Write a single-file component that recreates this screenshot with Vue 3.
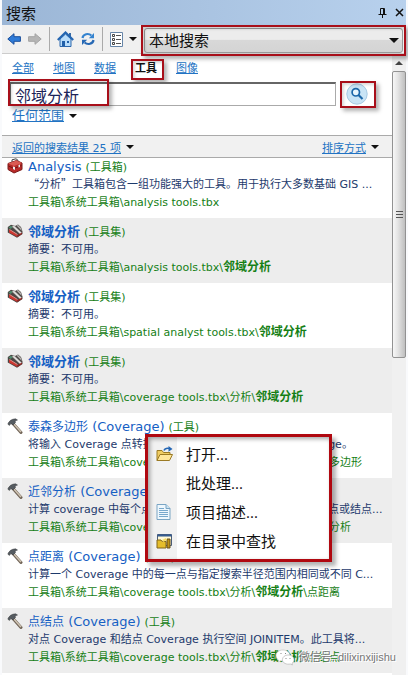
<script setup>
import { ref } from 'vue';

const scope = ref('本地搜索');
const keyword = ref('邻域分析');
const activeTab = ref('工具');
const menuOpen = ref(true);

const tabs = ['全部', '地图', '数据', '工具', '图像'];

const root = '工具箱\\系统工具箱\\';

const results = [
  { icon: 'box', name: '', suffix: 'Analysis', type: '工具箱', quoted: '“分析”', desc: '工具箱包含一组功能强大的工具。用于执行大多数基础 GIS ...', path: root + 'analysis tools.tbx' },
  { icon: 'set', name: '邻域分析', strong: true, type: '工具集', desc: '摘要：不可用。', path: root + 'analysis tools.tbx\\', hit: '邻域分析' },
  { icon: 'set', name: '邻域分析', strong: true, type: '工具集', desc: '摘要：不可用。', path: root + 'spatial analyst tools.tbx\\', hit: '邻域分析' },
  { icon: 'set', name: '邻域分析', strong: true, type: '工具集', desc: '摘要：不可用。', path: root + 'coverage tools.tbx\\分析\\', hit: '邻域分析' },
  { icon: 'hammer', name: '泰森多边形', suffix: '(Coverage)', type: '工具', desc: '将输入 Coverage 点转换为由泰森多边形组成的输出 Coverage。', path: root + 'coverage tools.tbx\\分析\\', hit: '邻域分析', tail: '\\泰森多边形' },
  { icon: 'hammer', name: '近邻分析', suffix: '(Coverage)', type: '工具', desc: '计算 coverage 中每个点与另一个图层要素中距离最近的线、点或结点...', path: root + 'coverage tools.tbx\\分析\\', hit: '邻域分析', tail: '\\近邻分析' },
  { icon: 'hammer', name: '点距离', suffix: '(Coverage)', type: '工具', desc: '计算一个 Coverage 中的每一点与指定搜索半径范围内相同或不同 C...', path: root + 'coverage tools.tbx\\分析\\', hit: '邻域分析', tail: '\\点距离' },
  { icon: 'hammer', name: '点结点', suffix: '(Coverage)', type: '工具', desc: '对点 Coverage 和结点 Coverage 执行空间 JOINITEM。此工具将...', path: root + 'coverage tools.tbx\\分析\\', hit: '邻域分析', tail: '\\点结点' },
];

const menu = [
  { icon: 'open', label: '打开...' },
  { icon: '', label: '批处理...' },
  { icon: 'doc', label: '项目描述...' },
  { icon: 'catalog', label: '在目录中查找' },
];
</script>

<template>
  <div class="panel">
    <header class="titlebar">
      <span class="caption">搜索</span>
      <button class="tb" aria-label="固定">
        <svg width="9" height="10" viewBox="0 0 9 10"><path d="M2.500 6V.5h4V6M5.500.5V6M.5 6.500h8M4.500 6.500V10" fill="none" stroke="#111" /></svg>
      </button>
      <button class="tb" aria-label="关闭">
        <svg width="9" height="9" viewBox="0 0 9 9"><path d="M1 1l7 7M8 1L1 8" stroke="#111" stroke-width="1.500" /></svg>
      </button>
    </header>

    <div class="toolbar">
      <button class="tool" aria-label="后退">
        <svg width="14" height="12" viewBox="0 0 14 12"><path d="M7 .7v3h6.400v4.600H7v3L.8 6z" fill="#2f7bd8" stroke="#1b4f9c" /></svg>
      </button>
      <button class="tool" aria-label="前进">
        <svg width="14" height="12" viewBox="0 0 14 12"><path d="M7 .7v3H.6v4.600H7v3L13.200 6z" fill="#b5b5b5" stroke="#a4a4a4" /></svg>
      </button>
      <span class="sep"></span>
      <button class="tool" aria-label="主页">
        <svg width="17" height="17" viewBox="0 0 17 17">
          <path d="M12 2h2v4h-2z" fill="#376ba8" />
          <path d="M3 8v7.500h11V8L8.500 3z" fill="#b8dcfa" stroke="#2b66ac" />
          <path d="M.8 9L8.500 1.500 16.200 9" fill="none" stroke="#2465b1" stroke-width="2.200" />
          <path d="M5 10h3v5H5z" fill="#215fa9" /><path d="M10 10h2v2h-2z" fill="#215fa9" />
        </svg>
      </button>
      <button class="tool" aria-label="刷新">
        <svg width="14" height="14" viewBox="0 0 14 14">
          <path d="M1.500 6C2 2 7.500.8 10.300 3.500" fill="none" stroke="#3483cf" stroke-width="2.200" />
          <path d="M13 1v5.200H7.800z" fill="#3483cf" />
          <path d="M12.500 8C12 12 6.500 13.200 3.700 10.500" fill="none" stroke="#2769b5" stroke-width="2.200" />
          <path d="M1 13V7.800h5.200z" fill="#2769b5" />
        </svg>
      </button>
      <span class="sep"></span>
      <button class="tool views" aria-label="视图">
        <svg width="13" height="15" viewBox="0 0 13 15">
          <path d="M.5.5h12v14H.5z" fill="#fff" stroke="#6685a8" />
          <path d="M2.500 2.500h2v2h-2zM2.500 6.500h2v2h-2zM2.500 10.500h2v2h-2z" fill="#fff" stroke="#444" />
          <path d="M6 3.500h5M6 7.500h5M6 11.500h5" stroke="#555" />
        </svg>
        <i class="caret"></i>
      </button>
      <div class="scope mark">
        <select v-model="scope" aria-label="搜索范围">
          <option>本地搜索</option>
        </select>
        <i class="caret"></i>
      </div>
    </div>

    <div class="body">
      <main class="content">
        <nav class="tabs">
          <a v-for="tab in tabs" :key="tab" href="#" :class="{ active: tab === activeTab, mark: tab === activeTab }" @click.prevent="activeTab = tab">{{ tab }}</a>
        </nav>

        <form class="search" @submit.prevent>
          <div class="field mark">
            <input v-model="keyword" type="text" aria-label="搜索内容" />
          </div>
          <button class="go mark" aria-label="搜索">
            <svg width="22" height="22" viewBox="0 0 22 22">
              <circle cx="11" cy="11" r="10.200" fill="#c9e4f5" stroke="#a6c9e2" />
              <circle cx="9.800" cy="9.300" r="3.700" fill="#e9f6fd" stroke="#1c67a8" stroke-width="1.700" />
              <path d="M12.500 12l4 4" stroke="#1c67a8" stroke-width="2.200" />
            </svg>
          </button>
        </form>

        <div class="extent">
          <a href="#" @click.prevent>任何范围</a><i class="caret"></i>
        </div>

        <div class="summary">
          <a href="#" @click.prevent>返回的搜索结果 25 项</a><i class="caret"></i>
          <a class="sort" href="#" @click.prevent>排序方式</a><i class="caret"></i>
        </div>

        <ul class="results">
          <li v-for="(item, i) in results" :key="i" @contextmenu.prevent="menuOpen = true">
            <svg v-if="item.icon === 'box'" class="icon" width="16" height="16" viewBox="0 0 16 16">
              <path d="M5 4V1.800L9 .8l2 1.500V4" fill="none" stroke="#444" />
              <path d="M1 5.500L9.500 2.500 15 5v6.500L7 15 1 11.500z" fill="#b92a28" stroke="#7b1b1a" />
              <path d="M1 5.500L9.500 2.500 15 5 7 8z" fill="#da5b53" />
              <path d="M1.500 8L7 10.500 14.500 7.500" fill="none" stroke="#721615" />
              <path d="M6 8.500l2 .5v3l-2-1zM11.500 7l1.500-.5v2.500l-1.500.5z" fill="#eee" />
            </svg>
            <svg v-else-if="item.icon === 'set'" class="icon" width="16" height="16" viewBox="0 0 16 16">
              <path d="M.8 4L4 1.800 8 3l3-1.500 3 2.500 1.500 4.500V11L10 14.800.8 9.500z" fill="#4a4543" />
              <path d="M1.500 4.500L4 2.800 6 4 3.500 6z" fill="#4f8a6d" />
              <path d="M5 3.500l2-1L15 10l-1.500 1.500z" fill="#e4e2e0" stroke="#8a8683" stroke-width=".5" />
              <path d="M9.500 2.500L11 2l3 3 .8 3z" fill="#b9b6b3" />
              <path d="M2 6.500l8.500 5.500v2L2 9.500z" fill="#cf3630" />
              <path d="M2.500 6.500l8 5" stroke="#ef8d85" />
              <path d="M10.500 12l4.500-2.500V11l-4.500 3z" fill="#8e211e" />
            </svg>
            <svg v-else class="icon" width="16" height="16" viewBox="0 0 16 16">
              <path d="M6 5.500L14 14.500" stroke="#6f6255" stroke-width="3" stroke-linecap="round" />
              <path d="M6.500 5.500L14 14" stroke="#cfc4b3" stroke-width="1.500" />
              <path d="M.8 6C2 3 4.500 1 8.500.8l2 1.200-2.500 1L8.500 4.500 6 7 4 5.500 2.300 7.500z" fill="#555b60" stroke="#303336" stroke-width=".5" />
            </svg>
            <div class="text">
              <h3>
                <a href="#" :class="{ strong: item.strong }" @click.prevent>{{ item.name }}<span v-if="item.suffix" class="latin">{{ (item.name ? ' ' : '') + item.suffix }}</span></a>
                <span class="type">({{ item.type }})</span>
              </h3>
              <p class="desc"><span v-if="item.quoted" class="quoted">{{ item.quoted }}</span>{{ item.desc }}</p>
              <p class="path">{{ item.path }}<b v-if="item.hit">{{ item.hit }}</b>{{ item.tail }}</p>
            </div>
          </li>
        </ul>
      </main>

      <div class="scrollbar">
        <i class="up"></i>
        <div class="thumb"><span></span><span></span><span></span></div>
      </div>
    </div>

    <div v-if="menuOpen" class="menu">
      <button v-for="entry in menu" :key="entry.label" @click="menuOpen = false">
        <span class="gutter">
          <svg v-if="entry.icon === 'open'" width="17" height="16" viewBox="0 0 17 16">
            <path d="M1 14.500V4.500h5l1.500 2H14V9" fill="#f0cc62" stroke="#9b7a24" />
            <path d="M1 14.500L4 8.500h12.500l-3 6z" fill="#ffe69a" stroke="#9b7a24" />
            <path d="M8 4.500C9 2 11 2 13.500 2.500" fill="none" stroke="#2466b4" stroke-width="1.500" />
            <path d="M12.500 0L16.500 3l-4 2.700z" fill="#2466b4" />
          </svg>
          <svg v-else-if="entry.icon === 'doc'" width="15" height="16" viewBox="0 0 15 16">
            <path d="M1 .5h9l4 4v11H1z" fill="#eef7fd" stroke="#7aa5c4" />
            <path d="M10 .5v4h4" fill="#cbe3f2" stroke="#7aa5c4" />
            <path d="M3 4.500h5M3 6.500h9M3 8.500h9M3 10.500h9M3 12.500h9" stroke="#77a8cc" />
          </svg>
          <svg v-else-if="entry.icon === 'catalog'" width="17" height="16" viewBox="0 0 17 16">
            <path d="M1.500 1.500h14v11h-14z" fill="#fff9d9" stroke="#4b5d78" />
            <path d="M1.500 1.500h14v2h-14z" fill="#355b91" />
            <path d="M1 7h4l1 1.500h4V15H1z" fill="#e5bd2b" stroke="#80651a" />
            <path d="M11 6h3v9h-3z" fill="#c19418" stroke="#66501a" />
            <path d="M6 7l4-2 1 2-4 2z" fill="#f6dc68" />
          </svg>
        </span>
        {{ entry.label }}
      </button>
    </div>

    <div class="watermark">
      <svg width="20" height="17" viewBox="0 0 20 17">
        <path d="M8 1C3.500 1 1 3.500 1 6.500c0 2 1 3.500 2.500 4.500L3 13l2.500-1.300c4 1 9-1 9.500-5.200C15 3.500 12 1 8 1z" fill="#fff" stroke="#bbb" stroke-width=".6" />
        <path d="M13 6c3.500 0 6 2 6 4.700 0 1.500-.8 2.800-2 3.600l.4 1.700-2-1c-4 .8-8-1-8-4.300C7.400 8 10 6 13 6z" fill="#fff" stroke="#aaa" stroke-width=".6" />
        <path d="M5.500 4.500h1M10 4.500h1M10.500 9.500h1M14.500 9.500h1" stroke="#888" />
      </svg>
      <span>微信号: dilixinxijishu</span>
    </div>
  </div>
</template>

<style>
body {
  margin: 0;
  background: #fff;
}
</style>

<style scoped>
.panel {
  position: relative;
  min-height: 100vh;
  display: flex;
  flex-direction: column;
  box-sizing: border-box;
  padding: 0 2px;
  background: #f9fafc;
  font-family: "DejaVu Sans", "Noto Sans CJK SC", sans-serif;
  font-size: 11px;
  color: #111;
}

button {
  border: 0;
  padding: 0;
  background: none;
  font-family: inherit;
  cursor: pointer;
}

a {
  color: #2273c3;
}

svg {
  display: block;
  flex: none;
}

/* red frame with a soft shadow */
.mark {
  position: relative;
}

.mark::after {
  content: "";
  position: absolute;
  inset: -3px;
  border: 2px solid #a80f1a;
  box-shadow: 3px 3px 4px rgba(0, 0, 0, 0.3), inset 2px 2px 3px rgba(0, 0, 0, 0.15);
  pointer-events: none;
}

.caret {
  flex: none;
  width: 0;
  height: 0;
  border: 4px solid transparent;
  border-top-color: #111;
  border-bottom: 0;
}

.titlebar {
  display: flex;
  align-items: center;
  gap: 8px;
  height: 25px;
  padding: 0 2px 0 4px;
  background: linear-gradient(90deg, #9bb6d6, #b8d1ed);
}

.caption {
  flex: 1;
  font-size: 15px;
}

.toolbar {
  display: flex;
  align-items: center;
  height: 28px;
  padding: 0 3px 0 5px;
  gap: 7px;
  background: #f0f0f0;
  border-bottom: 1px solid #ccc;
}

.sep {
  width: 1px;
  height: 24px;
  background: #aaa;
}

.views {
  display: flex;
  align-items: center;
  gap: 6px;
}

.scope {
  flex: 1;
  display: flex;
  align-items: center;
  margin-top: 3px;
}

.scope select {
  appearance: none;
  width: 100%;
  height: 25px;
  padding: 0 20px 0 4px;
  border: 1px solid #999;
  border-radius: 3px;
  background: linear-gradient(#ececec 45%, #d8d8d8 50%, #d4d4d4);
  font-family: inherit;
  font-size: 15px;
  color: #111;
}

.scope .caret {
  position: absolute;
  right: 4px;
  border-width: 5px 5px 0;
}

.body {
  flex: 1;
  display: flex;
}

.content {
  flex: 1;
  min-width: 0;
  background: #fff;
}

.tabs {
  display: flex;
  gap: 19px;
  padding: 6px 10px 0;
  line-height: 17px;
}

.tabs .active {
  color: #111;
  font-weight: bold;
  text-decoration: none;
}

.tabs .active::after {
  inset: -1px -7px -3px -4px;
}

.search {
  display: flex;
  align-items: center;
  padding: 5px 24px 0 8px;
}

.field {
  flex: 1;
  display: flex;
}

.field::after {
  right: auto;
  bottom: 0;
  left: -2px;
  width: 97px;
}

.field input {
  width: 100%;
  height: 24px;
  box-sizing: border-box;
  padding: 0 4px;
  border: 1px solid #aaa;
  border-top: 2px solid #666;
  border-left-color: #666;
  background: #fff;
  font-family: inherit;
  font-size: 16px;
  color: #1c2458;
}

.go {
  margin-left: 10px;
}

.go::after {
  inset: -2px -8px -3px -6px;
}

.extent {
  display: flex;
  align-items: center;
  gap: 5px;
  padding: 0 10px 9px;
  font-size: 13px;
  line-height: 20px;
}

.summary {
  display: flex;
  align-items: center;
  gap: 5px;
  height: 21px;
  padding: 0 13px 0 10px;
  background: #f1f1f1;
  border-top: 1px solid #aaa;
  border-bottom: 1px solid #aaa;
}

.sort {
  margin-left: auto;
}

.results {
  margin: 0;
  padding: 0;
  list-style: none;
}

.results li {
  display: flex;
  gap: 5px;
  padding: 5px 4px 6px 5px;
  white-space: nowrap;
  overflow: hidden;
}

/* the list is scrolled a little, so the first row is cut at its top */
.results li:first-child {
  padding-top: 0;
}

.results li:nth-child(even) {
  background: #ededed;
}

.text {
  min-width: 0;
  line-height: 18px;
}

.text h3,
.text p {
  margin: 0;
  height: 18px;
}

.text h3 {
  display: flex;
  align-items: baseline;
  gap: 4px;
  font-weight: normal;
}

.text h3 a {
  color: #1560c4;
  font-size: 12px;
  text-decoration: none;
  white-space: pre;
}

.text h3 .strong {
  font-size: 13px;
  font-weight: bold;
}

.text h3 .latin {
  font-size: 13px;
}

.type {
  font-size: 11px;
  color: #158015;
}

.desc {
  color: #1d3a6c;
}

.quoted {
  font-family: "Noto Sans CJK SC", sans-serif;
  line-height: 1;
}

.path {
  color: #158015;
}

.path b {
  font-size: 12px;
  line-height: 1;
}

.scrollbar {
  width: 14px;
  display: flex;
  flex-direction: column;
  align-items: center;
  background: #f0f0f0;
}

.up {
  margin: 7px 0 6px;
  border: 4px solid transparent;
  border-bottom-color: #444;
  border-top: 0;
}

.thumb {
  width: 100%;
  height: 287px;
  box-sizing: border-box;
  display: flex;
  flex-direction: column;
  align-items: center;
  justify-content: center;
  gap: 2px;
  border: 1px solid #929292;
  border-radius: 2px;
  background: linear-gradient(90deg, #f7f7f7, #e4e4e4 40%, #bfbfbf);
}

.thumb span {
  width: 7px;
  height: 1px;
  background: #555;
}

.menu {
  position: absolute;
  left: 145px;
  top: 434px;
  width: 187px;
  box-sizing: border-box;
  padding: 2px 0 4px;
  border: 3px solid #b00810;
  background: linear-gradient(90deg, #f1f1f1 29px, #fff 29px);
  box-shadow: 4px 4px 4px rgba(0, 0, 0, 0.3), inset 2px 2px 4px rgba(0, 0, 0, 0.35);
}

.menu button {
  display: flex;
  align-items: center;
  width: 100%;
  height: 29px;
  font-family: "Open Sans", "Noto Sans CJK SC", sans-serif;
  font-size: 15px;
  color: #111;
}

.gutter {
  width: 38px;
  padding-left: 8px;
  box-sizing: border-box;
}

.watermark {
  position: absolute;
  right: 12px;
  bottom: 9px;
  display: flex;
  align-items: center;
  gap: 4px;
  font-family: "Liberation Sans", "Noto Sans CJK SC", sans-serif;
  font-size: 11px;
  line-height: 17px;
  color: #777;
  text-shadow: 1px 1px 0 #fff, -1px -1px 0 #fff;
}
</style>
